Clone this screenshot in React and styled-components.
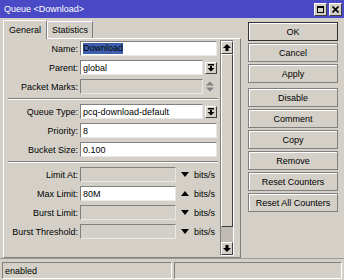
import React from 'react';
import styled, { createGlobalStyle } from 'styled-components';

const GlobalStyle = createGlobalStyle`
  html, body {
    margin: 0;
    padding: 0;
    background: #d4d0c8;
  }
  body {
    font-family: "Liberation Sans", Arial, sans-serif;
    font-size: 9px;
    color: #000;
  }
`;

const Window = styled.div`
  width: 344px;
  height: 280px;
  background: #d4d0c8;
  display: flex;
  flex-direction: column;
  overflow: hidden;
`;

const TitleBar = styled.div`
  height: 18px;
  flex: none;
  background: #4a4ac6;
  display: flex;
  align-items: center;
  padding: 0 2px 0 4px;
  color: #fff;
  font-size: 9px;
`;

const Title = styled.div`
  flex: 1;
`;

const TitleButton = styled.div`
  width: 11px;
  height: 11px;
  margin-left: 2px;
  background: #d4d0c8;
  border: 1px solid;
  border-color: #fff #404040 #404040 #fff;
  display: flex;
  align-items: center;
  justify-content: center;
`;

const Body = styled.div`
  flex: 1;
  display: flex;
  padding: 1px 0 0 3px;
  min-height: 0;
`;

const LeftSide = styled.div`
  width: 238px;
  display: flex;
  flex-direction: column;
`;

const Tabs = styled.div`
  display: flex;
  align-items: flex-end;
  height: 19px;
  flex: none;
`;

const Tab = styled.div`
  height: ${p => (p.active ? 19 : 17)}px;
  box-sizing: border-box;
  padding: 0 ${p => (p.active ? 5 : 4)}px;
  border: 1px solid;
  border-bottom: none;
  border-color: #fff #808080 #808080 #fff;
  background: #d4d0c8;
  display: flex;
  align-items: center;
  position: relative;
  z-index: ${p => (p.active ? 1 : 0)};
  margin-bottom: ${p => (p.active ? -1 : 0)}px;
`;

const Panel = styled.div`
  flex: 1;
  border: 1px solid;
  border-color: #fff #808080 #808080 #fff;
  display: flex;
  padding: 1px 5px 1px 0;
`;

const Form = styled.div`
  width: 213px;
  display: flex;
  flex-direction: column;
  gap: 4px;
  padding-top: 1px;
`;

const Row = styled.div`
  display: flex;
  align-items: center;
  height: 15px;
  flex: none;
`;

const Label = styled.div`
  width: 74px;
  text-align: right;
  margin-right: 2px;
  white-space: nowrap;
`;

const Input = styled.div`
  height: 15px;
  box-sizing: border-box;
  width: ${p => p.w}px;
  border: 1px solid;
  border-color: #808080 #e8e8e8 #e8e8e8 #808080;
  background: ${p => (p.disabled ? '#d4d0c8' : '#fff')};
  display: flex;
  align-items: center;
  padding-left: 2px;
`;

const Selected = styled.span`
  background: #3d5fae;
  color: #000;
  line-height: 11px;
`;

const ComboButton = styled.div`
  width: 12px;
  height: 12px;
  margin-left: 2px;
  box-sizing: border-box;
  border: 1px solid;
  border-color: #fff #404040 #404040 #fff;
  display: flex;
  align-items: center;
  justify-content: center;
`;

const Spinner = styled.div`
  width: 14px;
  display: flex;
  justify-content: center;
`;

const Unit = styled.div`
  display: flex;
  align-items: center;
  gap: 5px;
  margin-left: 5px;
`;

const Separator = styled.div`
  height: 0;
  flex: none;
  border-top: 1px solid #808080;
  border-bottom: 1px solid #fff;
  margin-left: 4px;
  width: 210px;
`;

const ScrollBar = styled.div`
  width: 14px;
  margin-left: 3px;
  display: flex;
  flex-direction: column;
  border: 1px solid;
  border-color: #808080 #fff #fff #808080;
  box-sizing: border-box;
`;

const ScrollButton = styled.div`
  height: 13px;
  flex: none;
  border: 1px solid;
  border-color: #fff #404040 #404040 #fff;
  box-sizing: border-box;
  display: flex;
  align-items: center;
  justify-content: center;
`;

const Thumb = styled.div`
  flex: 1;
  border: 1px solid;
  border-color: #fff #404040 #404040 #fff;
`;

const Track = styled.div`
  height: 15px;
  flex: none;
  background: #bfbbb4;
`;

const Buttons = styled.div`
  width: 90px;
  margin-left: 7px;
  padding-top: 3px;
  display: flex;
  flex-direction: column;
  gap: 2px;
`;

const Button = styled.div`
  height: 19px;
  box-sizing: border-box;
  border: 1px solid ${p => (p.primary ? '#303030' : '#808080')};
  box-shadow: inset 1px 1px 0 #fff;
  display: flex;
  align-items: center;
  justify-content: center;
  margin-top: ${p => (p.spaced ? 3 : 0)}px;
`;

const StatusBar = styled.div`
  height: 22px;
  flex: none;
  display: flex;
  gap: 2px;
  padding: 3px 2px 1px 2px;
  box-sizing: border-box;
  border-top: 1px solid #a09c94;
`;

const StatusField = styled.div`
  width: ${p => p.w}px;
  flex: ${p => (p.w ? 'none' : 1)};
  border: 1px solid;
  border-color: #808080 #fff #fff #808080;
  display: flex;
  align-items: center;
  padding-left: 2px;
`;

const ComboIcon = () => (
  <svg width="8" height="8" viewBox="0 0 8 8">
    <rect x="1" y="0" width="6" height="1.5" fill="#000" />
    <rect x="3" y="2" width="2" height="2" fill="#000" />
    <polygon points="0.5,4 7.5,4 4,7.5" fill="#000" />
  </svg>
);

const UpDown = ({ color = '#808080' }) => (
  <svg width="8" height="11" viewBox="0 0 8 11">
    <polygon points="0,4.5 8,4.5 4,0.5" fill={color} />
    <polygon points="0,6.5 8,6.5 4,10.5" fill={color} />
  </svg>
);

const Tri = ({ up }) => (
  <svg width="8" height="5" viewBox="0 0 8 5">
    <polygon points={up ? '0,5 8,5 4,0' : '0,0 8,0 4,5'} fill="#000" />
  </svg>
);

const ArrowIcon = ({ up }) => (
  <svg width="8" height="7" viewBox="0 0 8 7" style={{ transform: up ? 'none' : 'rotate(180deg)' }}>
    <polygon points="0,4 8,4 4,0" fill="#000" />
    <rect x="2.5" y="4" width="3" height="3" fill="#000" />
  </svg>
);

const LimitRow = ({ label, value, up }) => (
  <Row>
    <Label>{label}</Label>
    <Input w={96} disabled={!value}>{value}</Input>
    <Unit>
      <Tri up={up} />
      <span>bits/s</span>
    </Unit>
  </Row>
);

export default function App() {
  return (
    <Window>
      <GlobalStyle />
      <TitleBar>
        <Title>Queue &lt;Download&gt;</Title>
        <TitleButton>
          <svg width="7" height="7" viewBox="0 0 7 7">
            <rect x="0.5" y="0.5" width="6" height="6" fill="none" stroke="#000" />
            <rect x="0" y="0" width="7" height="2" fill="#000" />
          </svg>
        </TitleButton>
        <TitleButton>
          <svg width="7" height="7" viewBox="0 0 7 7">
            <path d="M0.5 0.5 L6.5 6.5 M6.5 0.5 L0.5 6.5" stroke="#000" strokeWidth="1.6" />
          </svg>
        </TitleButton>
      </TitleBar>
      <Body>
        <LeftSide>
          <Tabs>
            <Tab active>General</Tab>
            <Tab>Statistics</Tab>
          </Tabs>
          <Panel>
            <Form>
              <Row>
                <Label>Name:</Label>
                <Input w={137}><Selected>Download</Selected></Input>
              </Row>
              <Row>
                <Label>Parent:</Label>
                <Input w={123}>global</Input>
                <ComboButton><ComboIcon /></ComboButton>
              </Row>
              <Row>
                <Label>Packet Marks:</Label>
                <Input w={123} disabled />
                <Spinner><UpDown /></Spinner>
              </Row>
              <Separator />
              <Row>
                <Label>Queue Type:</Label>
                <Input w={123}>pcq-download-default</Input>
                <ComboButton><ComboIcon /></ComboButton>
              </Row>
              <Row>
                <Label>Priority:</Label>
                <Input w={137}>8</Input>
              </Row>
              <Row>
                <Label>Bucket Size:</Label>
                <Input w={137}>0.100</Input>
              </Row>
              <Separator />
              <LimitRow label="Limit At:" />
              <LimitRow label="Max Limit:" value="80M" up />
              <LimitRow label="Burst Limit:" />
              <LimitRow label="Burst Threshold:" />
            </Form>
            <ScrollBar>
              <ScrollButton><ArrowIcon up /></ScrollButton>
              <Thumb />
              <Track />
              <ScrollButton><ArrowIcon /></ScrollButton>
            </ScrollBar>
          </Panel>
        </LeftSide>
        <Buttons>
          <Button primary>OK</Button>
          <Button>Cancel</Button>
          <Button>Apply</Button>
          <Button spaced>Disable</Button>
          <Button>Comment</Button>
          <Button>Copy</Button>
          <Button>Remove</Button>
          <Button>Reset Counters</Button>
          <Button>Reset All Counters</Button>
        </Buttons>
      </Body>
      <StatusBar>
        <StatusField w={166}>enabled</StatusField>
        <StatusField />
      </StatusBar>
    </Window>
  );
}
